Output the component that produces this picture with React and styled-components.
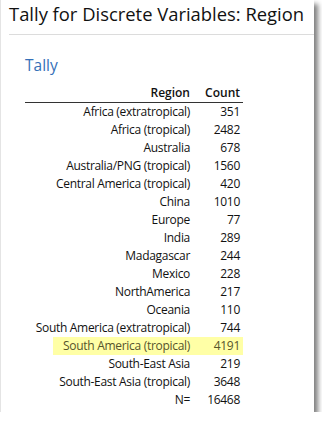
import styled, { createGlobalStyle } from 'styled-components';

const GlobalStyle = createGlobalStyle`
  body {
    margin: 0;
    background: #ffffff;
    font-family: 'Open Sans', 'Noto Sans', sans-serif;
  }
`;

const tally = [
  { region: 'Africa (extratropical)', count: 351 },
  { region: 'Africa (tropical)', count: 2482 },
  { region: 'Australia', count: 678 },
  { region: 'Australia/PNG (tropical)', count: 1560 },
  { region: 'Central America (tropical)', count: 420 },
  { region: 'China', count: 1010 },
  { region: 'Europe', count: 77 },
  { region: 'India', count: 289 },
  { region: 'Madagascar', count: 244 },
  { region: 'Mexico', count: 228 },
  { region: 'NorthAmerica', count: 217 },
  { region: 'Oceania', count: 110 },
  { region: 'South America (extratropical)', count: 744 },
  { region: 'South America (tropical)', count: 4191, highlight: 28 },
  { region: 'South-East Asia', count: 219 },
  { region: 'South-East Asia (tropical)', count: 3648 },
];

export default function App() {
  const total = tally.reduce((sum, t) => sum + t.count, 0);

  return (
    <>
      <GlobalStyle />
      <Window>
        <Title>Tally for Discrete Variables: Region</Title>
        <Section>
          <Heading>Tally</Heading>
          <Table>
            <HeaderRow>
              <Label>Region</Label>
              <Count>Count</Count>
            </HeaderRow>
            {tally.map((t) => (
              <Row key={t.region} $highlight={t.highlight}>
                <Label>{t.region}</Label>
                <Count>{t.count}</Count>
              </Row>
            ))}
            <Row>
              <Label>N=</Label>
              <Count>{total}</Count>
            </Row>
          </Table>
        </Section>
      </Window>
    </>
  );
}

const Window = styled.div`
  width: 314px;
  height: 412px;
  background: #fff;
  border-left: 1px solid #e4e4e4;
  box-sizing: border-box;
  box-shadow: 4px 4px 5px rgba(0, 0, 0, 0.5);
  overflow: hidden;
`;

const Title = styled.h1`
  margin: 0 0 0 8px;
  padding-top: 1px;
  height: 33px;
  border-bottom: 1px solid #dcdcdc;
  font-size: 18.4px;
  font-weight: 400;
  line-height: 26px;
  color: #111;
  white-space: nowrap;
`;

const Section = styled.div`
  padding: 20px 0 0 24px;
`;

const Heading = styled.h2`
  margin: 0;
  font-size: 15.5px;
  font-weight: 400;
  line-height: 20px;
  color: #3570b8;
`;

const Table = styled.div`
  width: 218px;
  margin-top: 9px;
  font-size: 12px;
  letter-spacing: -0.3px;
  color: #111;
`;

const Row = styled.div`
  display: flex;
  height: 18px;
  line-height: 18px;
  background: ${(p) =>
    p.$highlight
      ? `linear-gradient(to right, transparent ${p.$highlight}px, #ffffa6 ${p.$highlight}px)`
      : 'transparent'};
  color: ${(p) => (p.$highlight ? '#56542c' : 'inherit')};
`;

const HeaderRow = styled(Row)`
  border-bottom: 1px solid #333;
  font-weight: 600;
  letter-spacing: 0;
`;

const Label = styled.div`
  flex: 1;
  text-align: right;
  white-space: nowrap;
`;

const Count = styled.div`
  width: 50px;
  padding-right: 3px;
  text-align: right;
`;
